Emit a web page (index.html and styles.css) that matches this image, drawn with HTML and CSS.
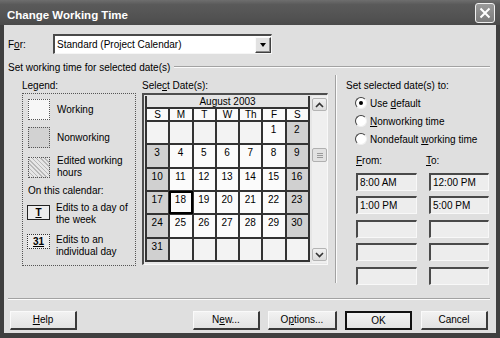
FILE: index.html
```html
<!DOCTYPE html>
<html>
<head>
<meta charset="utf-8">
<link rel="stylesheet" href="styles.css">
</head>
<body>
<div class="dialog">
  <div class="titlebar">
    <span class="title">Change Working Time</span>
    <div class="close"><svg width="12" height="12" viewBox="0 0 12 12"><path d="M1.5 1.5 L10.5 10.5 M10.5 1.5 L1.5 10.5" stroke="#fff" stroke-width="2" fill="none"/></svg></div>
  </div>
  <div class="body">
    <div class="for-row">
      <span class="for-label">F<u>o</u>r:</span>
      <div class="combo">
        <span class="combo-text">Standard (Project Calendar)</span>
        <span class="combo-btn"><span class="tri"></span></span>
      </div>
    </div>
    <div class="group-head"><span>Set working time for selected date(s)</span><span class="rule"></span></div>
    <div class="main">
      <div class="legend-col">
        <div class="lbl">Legend:</div>
        <div class="legend-box">
          <div class="lg-row"><span class="sw sw-work"></span><span>Working</span></div>
          <div class="lg-row r2"><span class="sw sw-non"></span><span>Nonworking</span></div>
          <div class="lg-row r3"><span class="sw sw-edit"></span><span class="two">Edited working<br>hours</span></div>
          <div class="on-cal">On this calendar:</div>
          <div class="lg-row top r4"><span class="mark mark-t"><u>T</u></span><span class="two">Edits to a day of<br>the week</span></div>
          <div class="lg-row top r5"><span class="mark mark-31"><u>31</u></span><span class="two">Edits to an<br>individual day</span></div>
        </div>
      </div>
      <div class="cal-col">
        <div class="lbl">Sele<u>c</u>t Date(s):</div>
        <div class="cal-box">
          <div class="grid">
            <div class="month">August 2003</div>
            <div class="dh">S</div><div class="dh">M</div><div class="dh">T</div><div class="dh">W</div><div class="dh">Th</div><div class="dh">F</div><div class="dh">S</div>
            <div class="c e"></div><div class="c e"></div><div class="c e"></div><div class="c e"></div><div class="c e"></div><div class="c">1</div><div class="c w">2</div>
            <div class="c w">3</div><div class="c">4</div><div class="c">5</div><div class="c">6</div><div class="c">7</div><div class="c">8</div><div class="c w">9</div>
            <div class="c w">10</div><div class="c">11</div><div class="c">12</div><div class="c">13</div><div class="c">14</div><div class="c">15</div><div class="c w">16</div>
            <div class="c w">17</div><div class="c sel">18</div><div class="c">19</div><div class="c">20</div><div class="c">21</div><div class="c">22</div><div class="c w">23</div>
            <div class="c w">24</div><div class="c">25</div><div class="c">26</div><div class="c">27</div><div class="c">28</div><div class="c">29</div><div class="c w">30</div>
            <div class="c w">31</div><div class="c e"></div><div class="c e"></div><div class="c e"></div><div class="c e"></div><div class="c e"></div><div class="c e"></div>
          </div>
          <div class="scroll">
            <div class="sbtn"><svg width="9" height="6" viewBox="0 0 9 6"><path d="M1 5 L4.5 1.5 L8 5" stroke="#333" stroke-width="1.6" fill="none"/></svg></div>
            <div class="thumb"><span></span><span></span><span></span></div>
            <div class="sfill"></div>
            <div class="sbtn"><svg width="9" height="6" viewBox="0 0 9 6"><path d="M1 1 L4.5 4.5 L8 1" stroke="#333" stroke-width="1.6" fill="none"/></svg></div>
          </div>
        </div>
      </div>
      <div class="vsep"></div>
      <div class="right-col">
        <div class="lbl">Set selected date(s) to:</div>
        <div class="radios">
          <div class="radio-row"><span class="radio on"></span><span>Use <u>d</u>efault</span></div>
          <div class="radio-row"><span class="radio"></span><span><u>N</u>onworking time</span></div>
          <div class="radio-row"><span class="radio"></span><span>Nondefault <u>w</u>orking time</span></div>
        </div>
        <div class="times">
          <div class="tlbl"><u>F</u>rom:</div><div class="tlbl"><u>T</u>o:</div>
          <div class="inp">8:00 AM</div><div class="inp">12:00 PM</div>
          <div class="inp">1:00 PM</div><div class="inp">5:00 PM</div>
          <div class="inp"></div><div class="inp"></div>
          <div class="inp"></div><div class="inp"></div>
          <div class="inp"></div><div class="inp"></div>
        </div>
      </div>
    </div>
    <div class="hsep"></div>
    <div class="buttons">
      <div class="btn"><u>H</u>elp</div>
      <div class="spacer"></div>
      <div class="btn">N<u>e</u>w...</div>
      <div class="btn wide">O<u>p</u>tions...</div>
      <div class="btn def">OK</div>
      <div class="btn cancel">Cancel</div>
    </div>
  </div>
</div>
</body>
</html>
```
FILE: styles.css
```css
* { box-sizing: border-box; margin: 0; padding: 0; }
html, body { width: 500px; height: 338px; overflow: hidden; }
body {
  font-family: "Liberation Sans", Arial, sans-serif;
  font-size: 10px;
  color: #000;
  background: #3e3e3e;
}
u { text-decoration: underline; text-underline-offset: 1px; }

.dialog {
  width: 500px;
  height: 338px;
  background: #3f3f3f;
  display: flex;
  flex-direction: column;
}
.titlebar {
  height: 25px;
  flex: none;
  display: flex;
  align-items: flex-start;
  justify-content: space-between;
  padding: 0 5px 0 7px;
  background: linear-gradient(#6e6e6e, #5a5a5a 18%, #525252 70%, #4a4a4a);
}
.title {
  color: #fff;
  font-weight: bold;
  font-size: 11.5px;
  line-height: 13px;
  margin-top: 9px;
}
.close {
  width: 20px;
  height: 20px;
  margin-top: 3px;
  border: 1px solid #f0f0f0;
  border-radius: 3px;
  background: linear-gradient(#9a9a9a, #7c7c7c);
  display: flex;
  align-items: center;
  justify-content: center;
}

.body {
  flex: 1;
  margin: 0 4px 5px 4px;
  background: #dfdfdf;
  padding: 9px 6px 0 4px;
  display: flex;
  flex-direction: column;
}

.for-row { display: flex; align-items: center; height: 20px; }
.for-label { width: 45px; }
.combo {
  width: 219px;
  height: 20px;
  display: flex;
  align-items: center;
  background: #fff;
  border-top: 2px solid #4a4a4a;
  border-left: 2px solid #4a4a4a;
  border-right: 1px solid #f6f6f6;
  border-bottom: 1px solid #f6f6f6;
}
.combo-text { flex: 1; padding-left: 2px; }
.combo-btn {
  width: 16px;
  height: 16px;
  background: #e2e2e2;
  border-top: 1px solid #fafafa;
  border-left: 1px solid #fafafa;
  border-right: 1px solid #404040;
  border-bottom: 1px solid #404040;
  box-shadow: inset -1px -1px 0 #8a8a8a;
  display: flex;
  align-items: center;
  justify-content: center;
}
.tri {
  width: 0; height: 0;
  border-left: 3.5px solid transparent;
  border-right: 3.5px solid transparent;
  border-top: 4px solid #000;
}

.group-head { display: flex; align-items: center; height: 12px; margin-top: 7px; }
.rule {
  flex: 1;
  margin-left: 4px;
  height: 2px;
  border-top: 1px solid #a2a2a2;
  border-bottom: 1px solid #fbfbfb;
}

.main { display: flex; height: 208px; margin-top: 2px; }
.lbl { line-height: 12px; height: 12px; }

.legend-col { margin-left: 14px; width: 114px; padding-top: 5px; }
.legend-box {
  margin-top: 1px;
  height: 173px;
  border: 1px dotted #555;
  padding: 5px 3px 0 5px;
}
.lg-row { display: flex; align-items: center; line-height: 12px; }
.lg-row.top { align-items: flex-start; }
.r2 { margin-top: 7px; }
.r3 { margin-top: 7px; }
.r4 { margin-top: 5px; }
.r5 { margin-top: 8px; }
.sw {
  width: 22px;
  height: 21px;
  flex: none;
  margin-right: 7px;
  border: 1px dotted #555;
}
.sw-work { background: #f7f7f7; }
.sw-non { background: #d2d2d2; }
.sw-edit { background: repeating-linear-gradient(45deg, #b8b8b8 0 1px, #e6e6e6 1px 3px); }
.on-cal { line-height: 12px; margin-top: 6px; }
.mark {
  width: 23px;
  height: 15px;
  flex: none;
  margin-right: 6px;
  margin-left: -1px;
  display: flex;
  align-items: center;
  justify-content: center;
  font-weight: bold;
  font-size: 10px;
  background: #ececec;
}
.mark-t { border: 1px solid #222; margin-top: 3px; }
.mark-31 { border: 1px dotted #333; }

.cal-col { margin-left: 6px; width: 186px; padding-top: 5px; }
.cal-box {
  margin-top: 1px;
  height: 172px;
  display: flex;
  align-items: flex-start;
  border-top: 2px solid #4e4e4e;
  border-left: 2px solid #4e4e4e;
  border-right: 1px solid #f8f8f8;
  border-bottom: 1px solid #f8f8f8;
  padding: 1px 0 0 1px;
  background: #e6e6e6;
}
.grid {
  width: 165px;
  height: 166px;
  display: grid;
  grid-template-columns: repeat(7, 1fr);
  grid-template-rows: 11px 11px repeat(6, 1fr);
  gap: 2px;
  padding: 0 2px 2px 2px;
  background: #333;
}
.month {
  grid-column: 1 / -1;
  background: #e4e4e4;
  text-align: center;
  line-height: 11px;
}
.dh { background: #fafafa; text-align: center; line-height: 11px; }
.c {
  background: #fbfbfb;
  text-align: center;
  padding-top: 2px;
  padding-right: 1px;
  line-height: 12px;
}
.c.e { background: #f3f3f3; }
.c.w { background: #d0d0d0; }
.c.sel { box-shadow: 0 0 0 1px #000, inset 0 0 0 1px #000; }

.scroll {
  margin-left: 2px;
  width: 15px;
  height: 167px;
  display: flex;
  flex-direction: column;
  padding: 2px 0 2px;
  background: #efefef;
}
.sbtn {
  height: 13px;
  border: 1px solid #b4b4b4;
  border-radius: 2px;
  background: linear-gradient(#f0f0f0, #dcdcdc);
  display: flex;
  align-items: center;
  justify-content: center;
}
.thumb {
  margin-top: 37px;
  height: 14px;
  border: 1px solid #b0b0b0;
  border-radius: 2px;
  background: #e2e2e2;
  display: flex;
  flex-direction: column;
  align-items: center;
  justify-content: center;
  gap: 1px;
}
.thumb span { width: 6px; height: 1px; background: #9a9a9a; }
.sfill { flex: 1; }

.vsep {
  margin-left: 7px;
  width: 2px;
  border-left: 1px solid #a2a2a2;
  border-right: 1px solid #fbfbfb;
}

.right-col { margin-left: 9px; width: 144px; padding-top: 5px; }
.radios { margin-top: 2px; padding-left: 9px; }
.radio-row { display: flex; align-items: center; height: 18px; }
.radio {
  width: 12px;
  height: 12px;
  flex: none;
  margin-right: 3px;
  border-radius: 50%;
  background: #fff;
  border: 1px solid;
  border-color: #404040 #f0f0f0 #f0f0f0 #404040;
  display: flex;
  align-items: center;
  justify-content: center;
}
.radio.on::after {
  content: "";
  width: 4px;
  height: 4px;
  border-radius: 50%;
  background: #000;
}
.times {
  margin-top: 7px;
  padding-left: 10px;
  display: grid;
  grid-template-columns: 61px 60px;
  grid-template-rows: 12px;
  grid-auto-rows: 18px;
  column-gap: 12px;
  row-gap: 5.5px;
}
.tlbl { line-height: 12px; margin-bottom: -2.5px; }
.tlbl + .tlbl { margin-left: -3px; }
.inp {
  background: #ededed;
  border-top: 2px solid #4a4a4a;
  border-left: 2px solid #4a4a4a;
  border-right: 1px solid #f8f8f8;
  border-bottom: 1px solid #f8f8f8;
  padding-left: 2px;
  line-height: 15px;
}

.hsep {
  margin-top: 15px;
  height: 2px;
  border-top: 1px solid #a2a2a2;
  border-bottom: 1px solid #fbfbfb;
}
.buttons {
  margin-top: 11px;
  height: 19px;
  display: flex;
  padding: 0 2px;
  gap: 8px;
}
.spacer { flex: 1; }
.btn {
  width: 67px;
  height: 19px;
  background: linear-gradient(#f2f2f2, #e2e2e2);
  border-top: 1px solid #fafafa;
  border-left: 1px solid #fafafa;
  border-right: 2px solid #3a3a3a;
  border-bottom: 2px solid #3a3a3a;
  text-align: center;
  line-height: 16px;
}
.btn.wide { width: 69px; }
.btn.def { border: 2px solid #111; line-height: 15px; }
.btn.cancel { margin-left: 1px; }
```
